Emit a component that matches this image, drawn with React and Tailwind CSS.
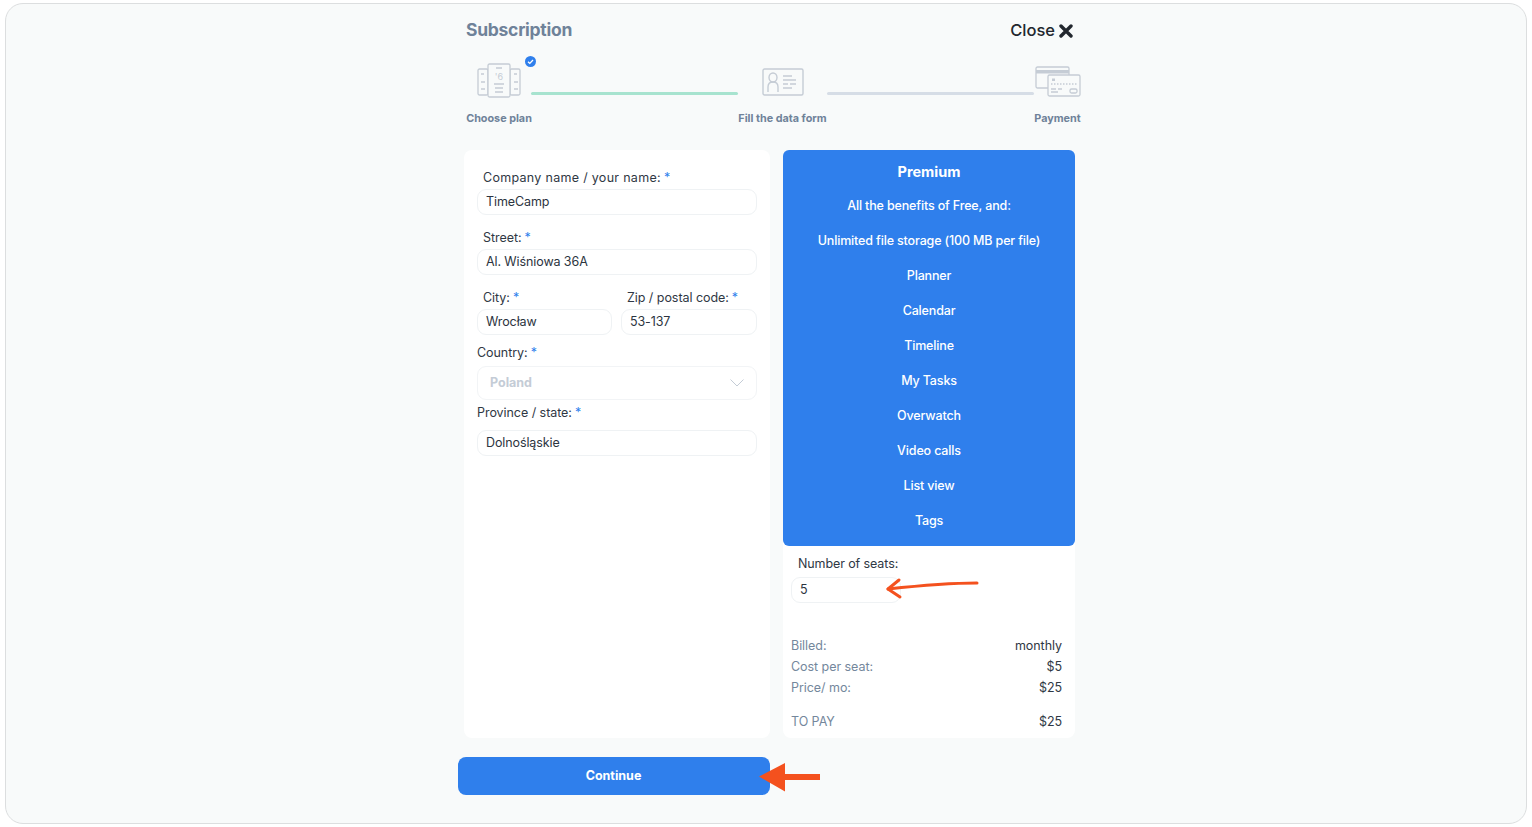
const FONT = "font-['Inter','Liberation_Sans',sans-serif]";

function Star() {
  return <span className="text-[#2f7fec] ml-[3px]">*</span>;
}

function Box({ children, className = "" }) {
  return (
    <div className={"h-[26px] rounded-[9px] border border-[#eff2f4] bg-white flex items-center pl-[8px] text-[12.5px] tracking-[-0.1px] text-[#2c3440] " + className}>
      {children}
    </div>
  );
}

function Label({ children, className = "", track = "tracking-[-0.05px]" }) {
  return (
    <div className={"h-[18px] leading-[18px] text-[12.5px] text-[#2f3844] whitespace-nowrap " + track + " " + className}>
      {children}
      <Star />
    </div>
  );
}

function PlanIcon() {
  return (
    <svg width="44" height="36" viewBox="0 0 44 36" fill="none" stroke="#c5ccd5" strokeWidth="1.3">
      <rect x="1" y="6" width="10" height="26" rx="1.5" />
      <rect x="33" y="6" width="10" height="26" rx="1.5" />
      <rect x="11" y="1" width="22" height="33" rx="1.5" fill="#f8fafa" />
      <path d="M19 5h6M17 21h10M18 25h8M18 29h8M4 11h3M4 19h4M4 26h4M37 11h3M37 19h4M37 26h4" />
      <text x="22" y="17" textAnchor="middle" fontSize="9" fill="#c5ccd5" stroke="none" fontFamily="Inter">'6</text>
    </svg>
  );
}

function IdIcon() {
  return (
    <svg width="42" height="28" viewBox="0 0 42 28" fill="none" stroke="#c5ccd5" strokeWidth="1.4">
      <rect x="1" y="1" width="40" height="26" rx="1.5" />
      <ellipse cx="11" cy="9.500" rx="4" ry="4.500" />
      <path d="M6 24v-5c0-3 2-5 5-5s5 2 5 5v5" />
      <path d="M21 8h9M21 12h13M21 16h5M28 16h6M21 20h9" />
    </svg>
  );
}

function CardIcon() {
  return (
    <svg width="46" height="32" viewBox="0 0 46 32" fill="none" stroke="#c5ccd5" strokeWidth="1.3">
      <rect x="1" y="1" width="33" height="21" rx="1.5" />
      <rect x="1" y="4" width="33" height="3.500" fill="#c5ccd5" stroke="none" />
      <rect x="13" y="9" width="32" height="21" rx="1.5" fill="#f8fafa" />
      <rect x="17" y="12.500" width="3" height="2.500" fill="#c5ccd5" stroke="none" />
      <path d="M16 18h26" strokeDasharray="1.500 1.500" />
      <path d="M16 23h5M23 23h4M16 26h7" />
      <rect x="35" y="23" width="7" height="4" rx="1.500" />
    </svg>
  );
}

function Step({ width, label, children }) {
  return (
    <div className={"flex flex-col items-center shrink-0 " + width}>
      <div className="h-[46px] flex items-end justify-center">{children}</div>
      <div className="mt-[10px] h-[16px] leading-[16px] text-[10.8px] font-bold text-[#6f8299] whitespace-nowrap">{label}</div>
    </div>
  );
}

const PLAN = [
  "All the benefits of Free, and:",
  "Unlimited file storage (100 MB per file)",
  "Planner",
  "Calendar",
  "Timeline",
  "My Tasks",
  "Overwatch",
  "Video calls",
  "List view",
  "Tags",
];

function SummaryRow({ label, value, className = "" }) {
  return (
    <div className={"flex justify-between h-[21px] leading-[21px] text-[12.5px] tracking-[-0.05px] " + className}>
      <span className="text-[#74879c]">{label}</span>
      <span className="text-[#2f3844]">{value}</span>
    </div>
  );
}

export default function App() {
  return (
    <div className={"w-[1532px] h-[827px] bg-white pt-[3px] pb-[3px] pl-[5px] pr-[5px] overflow-hidden " + FONT}>
      <div className="h-[821px] rounded-[18px] border border-[#dcdedf] bg-[#f8fafa] pl-[452px]">
        <div className="w-[623px]">
          {/* header */}
          <div className="flex items-center justify-between h-[21px] mt-[16px] pl-[8px] pr-[8px]">
            <div className="text-[17.5px] font-bold text-[#6f8299] tracking-[-0.27px]">Subscription</div>
            <div className="flex items-center gap-[4px] text-[16.5px] font-medium text-[#22272e]">
              Close
              <svg width="14" height="14" viewBox="0 0 14 14" fill="none" stroke="#22272e" strokeWidth="3.400" strokeLinecap="round">
                <path d="M2 2l10 10M12 2L2 12" />
              </svg>
            </div>
          </div>

          {/* stepper */}
          <div className="flex items-start mt-[14px] pl-[8px]">
            <Step width="w-[66px]" label="Choose plan">
              <div className="relative mb-[2px]">
                <PlanIcon />
                <svg className="absolute left-[48px] top-[-7px]" width="11" height="11" viewBox="0 0 11 11">
                  <circle cx="5.500" cy="5.500" r="5.500" fill="#2f7fec" />
                  <path d="M3 5.700l1.800 1.700L8 4" fill="none" stroke="#fff" strokeWidth="1.300" />
                </svg>
              </div>
            </Step>
            <div className="h-[3px] w-[207px] shrink-0 mt-[37px] -ml-px bg-[#a7e3cf] rounded-full" />
            <Step width="w-[89px]" label="Fill the data form">
              <div className="mb-[5px]"><IdIcon /></div>
            </Step>
            <div className="h-[3px] w-[207px] shrink-0 mt-[37px] bg-[#d6dde6] rounded-full" />
            <Step width="w-[47px]" label="Payment">
              <div className="mb-[3px]"><CardIcon /></div>
            </Step>
          </div>

          {/* cards */}
          <div className="flex items-start mt-[23px] pl-[6px]">
            <div className="w-[306px] h-[588px] rounded-[8px] bg-white pt-[19px] px-[13px]">
              <Label className="pl-[6px]" track="tracking-[0.3px]">Company name / your name:</Label>
              <Box className="mt-[2px]">TimeCamp</Box>
              <Label className="pl-[6px] mt-[14px]">Street:</Label>
              <Box className="mt-[2px]">Al. Wiśniowa 36A</Box>
              <div className="flex gap-[9px] mt-[14px]">
                <div className="w-[135px]">
                  <Label className="pl-[6px]">City:</Label>
                  <Box className="mt-[2px]">Wrocław</Box>
                </div>
                <div className="flex-1">
                  <Label className="pl-[6px]">Zip / postal code:</Label>
                  <Box className="mt-[2px]">53-137</Box>
                </div>
              </div>
              <Label className="mt-[9px]">Country:</Label>
              <div className="mt-[4px] h-[34px] rounded-[9px] border border-[#f2f4f6] flex items-center justify-between pl-[12px] pr-[12px] text-[12.5px] font-bold text-[#c4ccd6]">
                Poland
                <svg width="14" height="8" viewBox="0 0 14 8" fill="none" stroke="#c4ccd6" strokeWidth="1">
                  <path d="M0.500 0.500L7 7l6.500-6.500" />
                </svg>
              </div>
              <Label className="mt-[4px]">Province / state:</Label>
              <Box className="mt-[8px]">Dolnośląskie</Box>
            </div>

            <div className="w-[292px] h-[588px] ml-[13px] rounded-[8px] bg-white">
              <div className="h-[396px] rounded-[6px] bg-[#2f7fec] text-white flex flex-col items-center pt-[12px]">
                <div className="h-[20px] leading-[20px] text-[14.5px] font-bold">Premium</div>
                <div className="flex flex-col items-center gap-[17px] mt-[15px]">
                  {PLAN.map((t) => (
                    <div key={t} className="h-[18px] leading-[18px] text-[12.5px] font-medium tracking-[-0.15px] whitespace-nowrap">{t}</div>
                  ))}
                </div>
              </div>
              <div className="px-[8px] pt-[9px]">
                <div className="pl-[7px] h-[18px] leading-[18px] text-[12.5px] tracking-[-0.1px] text-[#2f3844]">Number of seats:</div>
                <div className="relative mt-[4px]">
                  <Box className="w-[110px]">5</Box>
                  <svg className="absolute left-[94px] top-[-5px]" width="94" height="30" viewBox="0 0 94 30" fill="none" stroke="#f4511e" strokeWidth="3" strokeLinecap="round" strokeLinejoin="round">
                    <path d="M92 11C70 11 40 13 3 17" />
                    <path d="M14 8L3 17l12 8" />
                  </svg>
                </div>
                <div className="mt-[32px] pr-[5px]">
                  <SummaryRow label="Billed:" value="monthly" />
                  <SummaryRow label="Cost per seat:" value="$5" />
                  <SummaryRow label="Price/ mo:" value="$25" />
                  <SummaryRow label="TO PAY" value="$25" className="mt-[13px]" />
                </div>
              </div>
            </div>
          </div>

          {/* continue */}
          <div className="relative w-[312px] mt-[19px]">
            <div className="h-[38px] rounded-[8px] bg-[#2f7fec] flex items-center justify-center pr-[1px] text-[12.5px] font-bold text-white">Continue</div>
            <svg className="absolute left-[300px] top-[5px]" width="64" height="30" viewBox="0 0 64 30" fill="#f4511e">
              <path d="M1 14.500L27 1v11h35v6H27v11.500z" />
            </svg>
          </div>
        </div>
      </div>
    </div>
  );
}
